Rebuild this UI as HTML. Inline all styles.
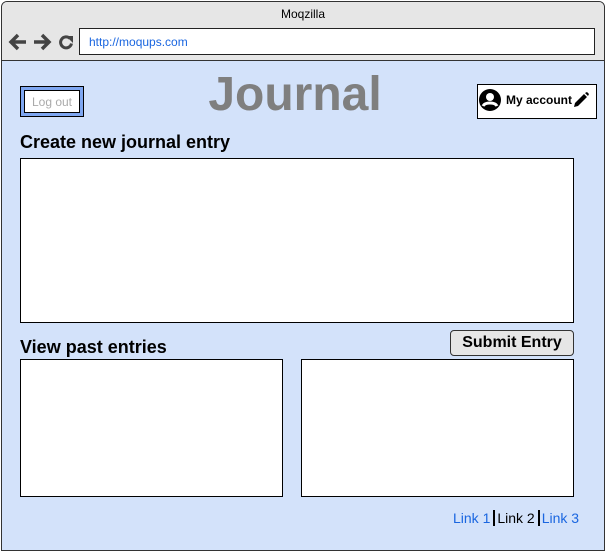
<!DOCTYPE html>
<html><head><meta charset="utf-8"><style>
*{margin:0;padding:0;box-sizing:border-box}
body{width:606px;height:552px;background:#fff;font-family:"Liberation Sans",Arial,sans-serif;position:relative;overflow:hidden}
.a{position:absolute}
.win{left:1px;top:1px;width:604px;height:550px;border:1px solid #333;border-radius:6px 6px 0 0;background:#d3e2fa;overflow:hidden}
.bar{left:0;top:0;width:602px;height:59px;background:#e6e6e6;border-bottom:1px solid #333}
.box{background:#fff;border:1px solid #000}
</style></head><body>
<div class="a win">
 <div class="a bar">
  <div class="a" style="left:0;top:5px;width:602px;text-align:center;font-size:12px;color:#000">Moqzilla</div>
  <svg class="a" style="left:6px;top:30px" width="70" height="20" viewBox="0 0 70 20">
   <path d="M3 10h15M10 3l-7 7 7 7" stroke="#444" stroke-width="3.5" fill="none"/>
   <path d="M26 10h15M34 3l7 7-7 7" stroke="#444" stroke-width="3.5" fill="none"/>
   <path d="M62 6.5a5.5 5.5 0 1 0 1.5 5" stroke="#444" stroke-width="3" fill="none"/>
   <path d="M58 4h7v7z" fill="#444"/>
  </svg>
  <div class="a box" style="left:77px;top:26px;width:516px;height:27px;border-color:#222;font-size:12px;color:#1a66e0;padding:6px 0 0 9px">http://moqups.com</div>
 </div>
 <div class="a" style="left:18px;top:84px;width:64px;height:31px;background:#7ea6f0;border:1px solid #000"></div>
 <div class="a box" style="left:22px;top:88px;width:56px;height:23px;font-size:12px;color:#aaa;text-align:center;padding-top:4px">Log out</div>
 <div class="a" style="left:166px;top:65px;width:254px;text-align:center;font-size:48px;font-weight:bold;color:#7f7f7f">Journal</div>
 <div class="a box" style="left:475px;top:82px;width:120px;height:35px"></div>
 <svg class="a" style="left:476px;top:86px" width="24" height="24" viewBox="0 0 24 24"><circle cx="12" cy="12" r="11" fill="#000"/><circle cx="12" cy="9" r="4" fill="#fff"/><path d="M5 18c2-4 12-4 14 0" stroke="#fff" stroke-width="3" fill="none"/></svg>
 <div class="a" style="left:504px;top:91px;font-size:12px;font-weight:bold">My account</div>
 <svg class="a" style="left:570px;top:89px" width="18" height="18" viewBox="0 0 18 18"><path d="M2 16l1-4 9-9 3 3-9 9z M13 2l2-1 2 2-1 2z" fill="#000"/></svg>
 <div class="a" style="left:18px;top:130px;font-size:18px;font-weight:bold">Create new journal entry</div>
 <div class="a box" style="left:18px;top:156px;width:554px;height:165px"></div>
 <div class="a" style="left:448px;top:328px;width:124px;height:26px;background:#e6e6e6;border:1px solid #333;border-radius:4px;font-size:16px;font-weight:bold;text-align:center;padding-top:3px">Submit Entry</div>
 <div class="a" style="left:18px;top:335px;font-size:18px;font-weight:bold">View past entries</div>
 <div class="a box" style="left:18px;top:357px;width:263px;height:138px"></div>
 <div class="a box" style="left:299px;top:357px;width:273px;height:138px"></div>
 <div class="a" style="left:451px;top:508px;font-size:14px;color:#1a66e0;white-space:nowrap">Link 1<span style="color:#000;border-left:2px solid #000;padding-left:2px;margin-left:3px">Link 2</span><span style="border-left:2px solid #000;padding-left:2px;margin-left:3px">Link 3</span></div>
</div>
</body></html>
